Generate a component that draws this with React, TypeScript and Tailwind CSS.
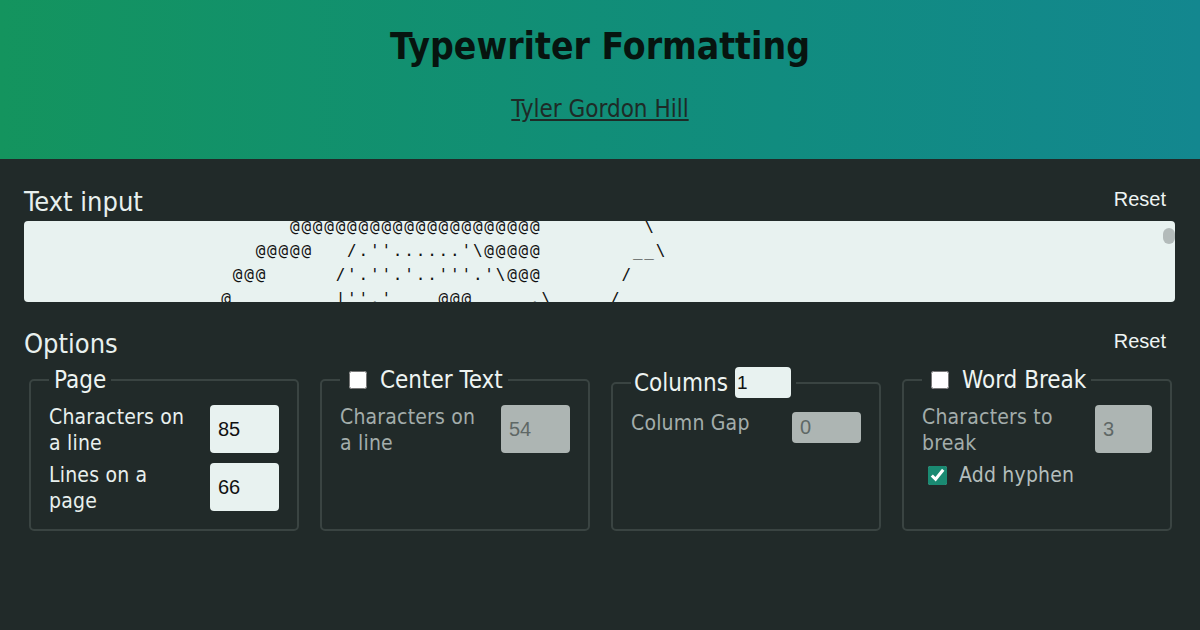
import { useState } from 'react';

// ─── Config ───────────────────────────────────────────────────────────────────

const SANS = "font-['DejaVu_Sans_Condensed','DejaVu_Sans',sans-serif] [font-stretch:condensed]";
const ARIAL = "font-['Liberation_Sans',Arial,sans-serif]";

const ART = [
  '                       @@@@@@@@@@@@@@@@@@@@@@         \\',
  '                    @@@@@   /.\'\'......\'\\@@@@@        __\\',
  '                  @@@      /\'.\'\'.\'..\'\'\'.\'\\@@@       /',
  '                 @         |\'\'.\'    @@@     .\\     /',
  '                @          |  .    @@@@@   . |    /',
  '                @          |\'\'.   @@@@@@@  \'. |   |',
].join('\n');

const inputBase = `${ARIAL} rounded-[4px] text-[20px] pl-[8px] outline-none`;
const inputOn = 'bg-[#e8f2f0] text-[#111]';
const inputOff = 'bg-[#adb5b3] text-[#5f6866]';
const labelText = 'text-[21px] leading-[26px] tracking-[0.2px]';

// ─── Bits ─────────────────────────────────────────────────────────────────────

function SectionHead({ title, onReset }: { title: string; onReset: () => void }) {
  return (
    <div className="flex items-start justify-between">
      <h2 className={`${SANS} text-[27px] leading-[30px] text-[#e8f0ee]`}>{title}</h2>
      <button onClick={onReset} className={`${ARIAL} mt-[1px] px-[9px] text-[20px] leading-[23px] text-[#eef4f3]`}>
        Reset
      </button>
    </div>
  );
}

function Row({
  label,
  labelW,
  value,
  disabled,
  inputW = 'w-[69px]',
}: {
  label: string;
  labelW: string;
  value: string;
  disabled?: boolean;
  inputW?: string;
}) {
  return (
    <div className="flex items-start justify-between">
      <span className={`${labelW} ${labelText} ${disabled ? 'text-[#a3adab]' : 'text-[#e8f0ee]'}`}>{label}</span>
      <input
        readOnly
        disabled={disabled}
        value={value}
        className={`${inputBase} ${inputW} mt-[1px] h-[48px] ${disabled ? inputOff : inputOn}`}
      />
    </div>
  );
}

const fieldsetCls = 'rounded-[5px] border-2 border-[#3a4442] px-[18px] pt-[11px] pb-[15px] min-w-0';
const legendCls = 'px-[5px] text-[24px] leading-[26px] text-[#eef4f2]';

// ─── Main Page ────────────────────────────────────────────────────────────────

export default function App() {
  const [centerText, setCenterText] = useState(false);
  const [wordBreak, setWordBreak] = useState(false);
  const [hyphen, setHyphen] = useState(true);

  return (
    <div className={`${SANS} min-h-screen bg-[#212a29]`}>
      {/* Header */}
      <header className="flex h-[159px] flex-col items-center bg-linear-to-r from-[#14945e] to-[#13878f] pt-[25px]">
        <h1 className="text-[37px] font-bold leading-[44px] text-[#07140f]">Typewriter Formatting</h1>
        <a href="#" className="mt-[26px] text-[24px] leading-[28px] text-[#1e2b27] underline">
          Tyler Gordon Hill
        </a>
      </header>

      <main className="px-[24px] pr-[25px] pt-[28px]">
        {/* Text input */}
        <SectionHead title="Text input" onReset={() => {}} />
        <div className="relative mt-[4px] h-[81px] overflow-hidden rounded-[4px] bg-[#e8f2f0]">
          <pre className="-mt-[6px] pl-[3px] font-['DejaVu_Sans_Mono',monospace] text-[16px] leading-[24px] tracking-[1.8px] text-[#111]">
            {ART}
          </pre>
          <span className="absolute right-0 top-[7px] h-[16px] w-[12px] rounded-full bg-[#b3bbba]" />
        </div>

        {/* Options */}
        <div className="mt-[27px]">
          <SectionHead title="Options" onReset={() => { setCenterText(false); setWordBreak(false); setHyphen(true); }} />
        </div>

        <div className="ml-[5px] mr-[3px] mt-[8px] grid grid-cols-4 gap-[21px]">
          <fieldset className={fieldsetCls}>
            <legend className={legendCls}>Page</legend>
            <div className="flex flex-col gap-[6px]">
              <Row label="Characters on a line" labelW="w-[140px]" value="85" />
              <Row label="Lines on a page" labelW="w-[140px]" value="66" />
            </div>
          </fieldset>

          <fieldset className={fieldsetCls}>
            <legend className={`${legendCls} flex items-center`}>
              <input
                type="checkbox"
                checked={centerText}
                onChange={(e) => setCenterText(e.target.checked)}
                className="ml-[4px] mr-[13px] h-[18px] w-[18px] accent-[#1a8a72]"
              />
              Center Text
            </legend>
            <Row label="Characters on a line" labelW="w-[140px]" value="54" disabled />
          </fieldset>

          <fieldset className={fieldsetCls}>
            <legend className="flex items-center pl-[3px] pr-[5px] text-[24px] leading-[26px] text-[#eef4f2]">
              Columns
              <input
                readOnly
                value="1"
                className={`${ARIAL} ml-[7px] h-[31px] w-[56px] rounded-[4px] bg-[#e8f2f0] pl-[2px] text-[19px] text-[#111] outline-none`}
              />
            </legend>
            <div className="flex items-start justify-between">
              <span className={`mt-[1px] ${labelText} text-[#a3adab]`}>Column Gap</span>
              <input
                readOnly
                disabled
                value="0"
                className={`${inputBase} ${inputOff} mt-[3px] h-[31px] w-[69px]`}
              />
            </div>
          </fieldset>

          <fieldset className={fieldsetCls}>
            <legend className={`${legendCls} flex items-center`}>
              <input
                type="checkbox"
                checked={wordBreak}
                onChange={(e) => setWordBreak(e.target.checked)}
                className="ml-[4px] mr-[13px] h-[18px] w-[18px] accent-[#1a8a72]"
              />
              Word Break
            </legend>
            <div className="flex flex-col gap-[6px]">
              <Row label="Characters to break" labelW="w-[160px]" value="3" disabled inputW="w-[57px]" />
              <label className={`flex items-center pl-[6px] ${labelText} text-[#b4bebc]`}>
                <input
                  type="checkbox"
                  checked={hyphen}
                  onChange={(e) => setHyphen(e.target.checked)}
                  className="mr-[12px] h-[19px] w-[19px] accent-[#1a8a72]"
                />
                Add hyphen
              </label>
            </div>
          </fieldset>
        </div>
      </main>
    </div>
  );
}
